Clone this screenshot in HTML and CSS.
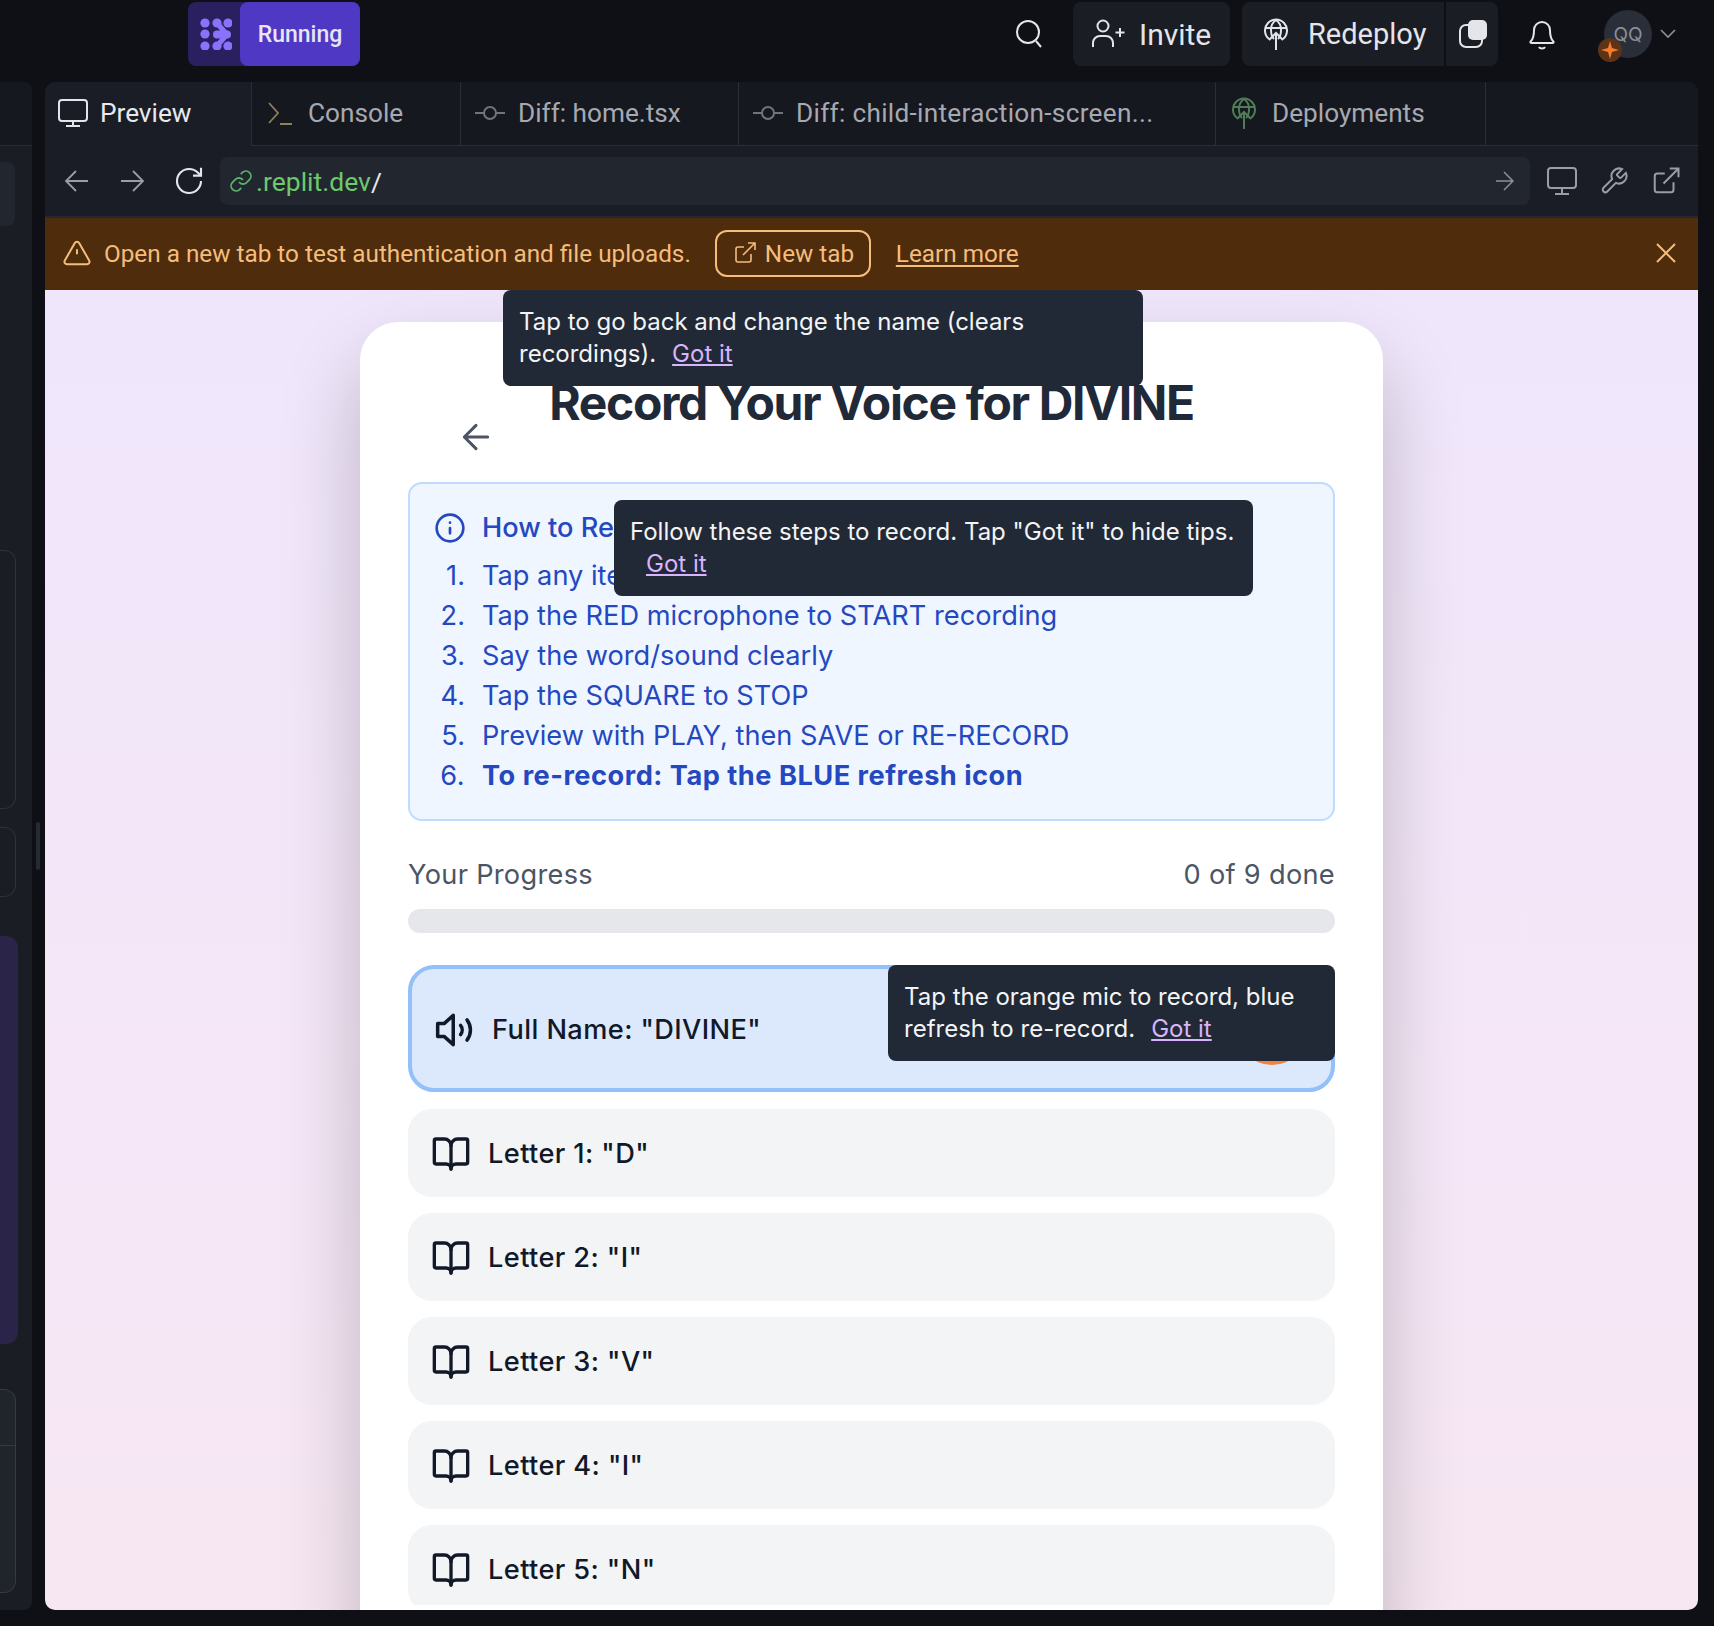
FILE: index.html
```html
<!DOCTYPE html>
<html lang="en">
<head>
  <meta charset="UTF-8">
  <title>Record Your Voice</title>
  <link rel="stylesheet" href="styles.css">
</head>
<body>

  <header class="topbar">
    <div class="status">
      <div class="status-logo">
        <svg width="32" height="32" viewBox="0 0 32 32" fill="#8b72fb">
          <circle cx="5" cy="5" r="4.6"/><circle cx="17" cy="5" r="4.6"/><circle cx="28" cy="5" r="4.6"/>
          <circle cx="5" cy="16" r="4.6"/>
          <circle cx="5" cy="28" r="4.6"/><circle cx="17" cy="28" r="4.6"/><circle cx="28" cy="28" r="4.6"/>
          <path d="M17 5l10 11.500-10 11.500" fill="none" stroke="#8b72fb" stroke-width="5" stroke-linecap="round" stroke-linejoin="round"/>
          <path d="M17 16.500h10" fill="none" stroke="#8b72fb" stroke-width="8" stroke-linecap="round"/>
        </svg>
      </div>
      <div class="status-label">Running</div>
    </div>

    <div class="top-actions">
      <button class="icon-btn">
        <svg width="32" height="32" viewBox="0 0 32 32" class="ico"><circle cx="15" cy="14" r="11"/><path d="M23 23l5 6"/></svg>
      </button>
      <button class="chip invite">
        <svg width="34" height="30" viewBox="0 0 34 30" class="ico"><circle cx="12" cy="7" r="5.5"/><path d="M2 28v-4a7 7 0 0 1 7-7h6a7 7 0 0 1 7 7v4"/><path d="M29 9v9M24.500 13.500h9"/></svg>
        Invite
      </button>
      <div class="chip-group">
        <button class="chip redeploy">
          <svg width="24" height="32" viewBox="0 0 24 32" class="ico"><path d="M5 21a11 11 0 1 1 14 0"/><path d="M12 2c-3 2-5 6-5 10s1 7 3 9M12 2c3 2 5 6 5 10s-1 7-3 9M1.500 10h21"/><path d="M12 32V15M5 22l7-7 7 7"/></svg>
          Redeploy
        </button>
        <button class="chip stack">
          <svg width="28" height="28" viewBox="0 0 28 28"><rect x="1" y="5" width="22" height="22" rx="6" fill="none" stroke="#e4e5ea" stroke-width="2"/><rect x="9" y="0" width="19" height="20" rx="5" fill="#e4e5ea"/></svg>
        </button>
      </div>
      <button class="icon-btn bell">
        <svg width="28" height="32" viewBox="0 0 28 32" class="ico"><path d="M3 23c2-2 3-4 3-11a8 8 0 0 1 16 0c0 7 1 9 3 11 1 1 1 2-1 2H4c-2 0-2-1-1-2z"/><path d="M11 29c1 2 5 2 6 0"/></svg>
      </button>
      <div class="avatar">
        QQ
        <span class="spark">
          <svg width="18" height="18" viewBox="0 0 18 18"><path d="M9 0l2 7 7 2-7 2-2 7-2-7-7-2 7-2z" fill="#f97a2a"/></svg>
        </span>
      </div>
      <svg class="caret" width="16" height="10" viewBox="0 0 16 10"><path d="M1 1l7 7 7-7" fill="none" stroke="#8d9099" stroke-width="1.6"/></svg>
    </div>
  </header>

  <div class="workspace">
    <aside class="side">
      <div class="side-head"></div>
      <div class="side-field"></div>
      <div class="side-box box-a"></div>
      <div class="side-box box-b"></div>
      <div class="side-active"></div>
      <div class="side-box box-c"><div class="box-c-line"></div></div>
    </aside>

    <div class="gutter"><span class="grip"></span></div>

    <main class="panel">
      <nav class="tabs">
        <div class="tab active tab-preview">
          <svg width="30" height="28" viewBox="0 0 30 28" class="ico"><rect x="1" y="1" width="28" height="21" rx="3"/><path d="M15 22v5M8 27h14"/></svg>
          Preview
        </div>
        <div class="tab tab-console">
          <svg width="24" height="24" viewBox="0 0 24 24" fill="none" stroke="#8c8158" stroke-width="1.8"><path d="M1 2l9 10-9 10"/><path d="M12 23h12" stroke="#8c8158"/></svg>
          Console
        </div>
        <div class="tab tab-diff">
          <svg width="30" height="16" viewBox="0 0 30 16" class="ico-dim"><circle cx="15" cy="8" r="6"/><path d="M0 8h9M21 8h9"/></svg>
          Diff: home.tsx
        </div>
        <div class="tab tab-diff tab-long">
          <svg width="30" height="16" viewBox="0 0 30 16" class="ico-dim"><circle cx="15" cy="8" r="6"/><path d="M0 8h9M21 8h9"/></svg>
          Diff: child-interaction-screen...
        </div>
        <div class="tab tab-deploy">
          <svg width="24" height="32" viewBox="0 0 24 32" fill="none" stroke="#4f7d58" stroke-width="2"><path d="M5 21a11 11 0 1 1 14 0"/><path d="M12 2c-3 2-5 6-5 10s1 7 3 9M12 2c3 2 5 6 5 10s-1 7-3 9M1.500 10h21"/><path d="M12 32V15M5 22l7-7 7 7"/></svg>
          Deployments
        </div>
        <div class="tab-rest"></div>
      </nav>

      <div class="urlbar">
        <svg class="nav-back" width="24" height="24" viewBox="0 0 24 24" fill="none" stroke="#9a9da5" stroke-width="1.8"><path d="M12 2L2 12l10 10M2 12h22"/></svg>
        <svg class="nav-fwd" width="24" height="24" viewBox="0 0 24 24" fill="none" stroke="#9a9da5" stroke-width="1.8"><path d="M12 2l10 10-10 10M22 12H0"/></svg>
        <svg class="nav-reload" width="32" height="32" viewBox="0 0 24 24" fill="none" stroke="#e4e5ea" stroke-width="1.600"><path d="M21 12a9 9 0 1 1-9-9c2.520 0 4.930 1 6.740 2.740L21 8"/><path d="M21 2v6h-6"/></svg>
        <div class="url-input">
          <svg width="24" height="24" viewBox="0 0 24 24" fill="none" stroke="#58b368" stroke-width="1.800"><path d="M10 13a5 5 0 0 0 7.540.54l3-3a5 5 0 0 0-7.070-7.070l-1.720 1.710"/><path d="M14 11a5 5 0 0 0-7.540-.54l-3 3a5 5 0 0 0 7.070 7.070l1.710-1.710"/></svg>
          <span class="url-text">.replit.dev<span class="url-slash">/</span></span>
          <svg class="url-go" width="18" height="20" viewBox="0 0 18 20" fill="none" stroke="#8d9099" stroke-width="1.500"><path d="M8 1l9 9-9 9M17 10H0"/></svg>
        </div>
        <div class="url-tools">
          <svg width="30" height="30" viewBox="0 0 30 30" fill="none" stroke="#9a9da5" stroke-width="2"><rect x="1" y="2" width="28" height="20" rx="3"/><path d="M15 22v6M8 28h14"/></svg>
          <svg width="30" height="30" viewBox="0 0 24 24" fill="none" stroke="#9a9da5" stroke-width="1.600"><path d="M14.700 6.300a1 1 0 0 0 0 1.400l1.600 1.600a1 1 0 0 0 1.400 0l3.770-3.770a6 6 0 0 1-7.940 7.940l-6.910 6.910a2.120 2.120 0 0 1-3-3l6.910-6.910a6 6 0 0 1 7.940-7.940l-3.760 3.760z"/></svg>
          <svg width="30" height="30" viewBox="0 0 24 24" fill="none" stroke="#9a9da5" stroke-width="1.600"><path d="M18 13v6a2 2 0 0 1-2 2H5a2 2 0 0 1-2-2V8a2 2 0 0 1 2-2h6"/><path d="M15 2h7v7M10 14L22 2"/></svg>
        </div>
      </div>

      <div class="banner">
        <svg width="32" height="30" viewBox="0 0 24 24" class="ico-warn"><path d="M21.730 18l-8-14a2 2 0 0 0-3.480 0l-8 14A2 2 0 0 0 4 21h16a2 2 0 0 0 1.730-3z"/><path d="M12 9v4M12 17h.01"/></svg>
        <span class="banner-text">Open a new tab to test authentication and file uploads.</span>
        <button class="new-tab">
          <svg width="24" height="24" viewBox="0 0 24 24" class="ico-warn"><path d="M18 13v6a2 2 0 0 1-2 2H5a2 2 0 0 1-2-2V8a2 2 0 0 1 2-2h6"/><path d="M15 2h7v7M10 14L22 2"/></svg>
          New tab
        </button>
        <a class="learn" href="#">Learn more</a>
        <svg class="banner-close" width="22" height="22" viewBox="0 0 22 22" fill="none" stroke="#f5bd7c" stroke-width="2"><path d="M2 2l18 18M20 2L2 20"/></svg>
      </div>

      <div class="content">
        <div class="tip tip-back">
          Tap to go back and change the name (clears recordings).<a href="#">Got it</a>
        </div>

        <section class="card">
          <div class="card-head">
            <h1>Record Your Voice for DIVINE</h1>
            <svg class="back" width="40" height="40" viewBox="0 0 24 24" fill="none" stroke="#4b5563" stroke-width="1.800" stroke-linecap="round" stroke-linejoin="round"><path d="M12 19l-7-7 7-7M19 12H5"/></svg>
          </div>

          <div class="howto">
            <div class="howto-title">
              <svg width="32" height="32" viewBox="0 0 24 24" fill="none" stroke="#2448c0" stroke-width="2" stroke-linecap="round"><circle cx="12" cy="12" r="10"/><path d="M12 16v-4M12 8h.01"/></svg>
              How to Record
            </div>
            <ol class="steps">
              <li><span class="num">1.</span>Tap any item to select it</li>
              <li><span class="num">2.</span>Tap the RED microphone to START recording</li>
              <li><span class="num">3.</span>Say the word/sound clearly</li>
              <li><span class="num">4.</span>Tap the SQUARE to STOP</li>
              <li><span class="num">5.</span>Preview with PLAY, then SAVE or RE-RECORD</li>
              <li class="strong"><span class="num">6.</span>To re-record: Tap the BLUE refresh icon</li>
            </ol>
            <div class="tip tip-steps">
              Follow these steps to record. Tap "Got it" to hide tips.<a href="#">Got it</a>
            </div>
          </div>

          <div class="progress-head">
            <span>Your Progress</span>
            <span>0 of 9 done</span>
          </div>
          <div class="progress-bar"></div>

          <div class="items">
            <div class="item current">
              <svg width="44" height="44" viewBox="0 0 24 24" fill="none" stroke="#111827" stroke-width="1.900" stroke-linecap="round" stroke-linejoin="round"><path d="M10.500 4L5.500 8.500H2v7h3.500l5 4.500z"/><path d="M14.500 9.500a4 4 0 0 1 0 5"/><path d="M18 6.500a9 9 0 0 1 0 11"/></svg>
              <span>Full Name: "DIVINE"</span>
              <span class="mic"></span>
              <div class="tip tip-mic">
                Tap the orange mic to record, blue refresh to re-record.<a href="#">Got it</a>
              </div>
            </div>
            <div class="item">
              <svg width="40" height="40" viewBox="0 0 24 24" class="ico-book"><path d="M12 7v14"/><path d="M3 18a1 1 0 0 1-1-1V4a1 1 0 0 1 1-1h5a4 4 0 0 1 4 4 4 4 0 0 1 4-4h5a1 1 0 0 1 1 1v13a1 1 0 0 1-1 1h-6a3 3 0 0 0-3 3 3 3 0 0 0-3-3z"/></svg>
              <span>Letter 1: "D"</span>
            </div>
            <div class="item">
              <svg width="40" height="40" viewBox="0 0 24 24" class="ico-book"><path d="M12 7v14"/><path d="M3 18a1 1 0 0 1-1-1V4a1 1 0 0 1 1-1h5a4 4 0 0 1 4 4 4 4 0 0 1 4-4h5a1 1 0 0 1 1 1v13a1 1 0 0 1-1 1h-6a3 3 0 0 0-3 3 3 3 0 0 0-3-3z"/></svg>
              <span>Letter 2: "I"</span>
            </div>
            <div class="item">
              <svg width="40" height="40" viewBox="0 0 24 24" class="ico-book"><path d="M12 7v14"/><path d="M3 18a1 1 0 0 1-1-1V4a1 1 0 0 1 1-1h5a4 4 0 0 1 4 4 4 4 0 0 1 4-4h5a1 1 0 0 1 1 1v13a1 1 0 0 1-1 1h-6a3 3 0 0 0-3 3 3 3 0 0 0-3-3z"/></svg>
              <span>Letter 3: "V"</span>
            </div>
            <div class="item">
              <svg width="40" height="40" viewBox="0 0 24 24" class="ico-book"><path d="M12 7v14"/><path d="M3 18a1 1 0 0 1-1-1V4a1 1 0 0 1 1-1h5a4 4 0 0 1 4 4 4 4 0 0 1 4-4h5a1 1 0 0 1 1 1v13a1 1 0 0 1-1 1h-6a3 3 0 0 0-3 3 3 3 0 0 0-3-3z"/></svg>
              <span>Letter 4: "I"</span>
            </div>
            <div class="item">
              <svg width="40" height="40" viewBox="0 0 24 24" class="ico-book"><path d="M12 7v14"/><path d="M3 18a1 1 0 0 1-1-1V4a1 1 0 0 1 1-1h5a4 4 0 0 1 4 4 4 4 0 0 1 4-4h5a1 1 0 0 1 1 1v13a1 1 0 0 1-1 1h-6a3 3 0 0 0-3 3 3 3 0 0 0-3-3z"/></svg>
              <span>Letter 5: "N"</span>
            </div>
          </div>
        </section>
      </div>
    </main>
  </div>

</body>
</html>
```

FILE: styles.css
```css
* {
  box-sizing: border-box;
}

body {
  margin: 0;
  height: 1626px;
  overflow: hidden;
  background: #0e1015;
  font-family: Roboto, "Noto Sans", sans-serif;
  color: #e8e9ed;
}

button {
  font: inherit;
  color: inherit;
  border: none;
  background: none;
  padding: 0;
}

.ico {
  fill: none;
  stroke: #e4e5ea;
  stroke-width: 2;
}

.ico-dim {
  fill: none;
  stroke: #70747c;
  stroke-width: 2;
}

.ico-warn {
  fill: none;
  stroke: #f5bd7c;
  stroke-width: 1.6;
}

.ico-book {
  fill: none;
  stroke: #111827;
  stroke-width: 2;
  stroke-linecap: round;
  stroke-linejoin: round;
}

/* top bar */
.topbar {
  height: 82px;
  padding: 2px 38px 0 188px;
  display: flex;
  align-items: flex-start;
  justify-content: space-between;
}

.status {
  display: flex;
  height: 64px;
  width: 172px;
  background: #2a2060;
  border-radius: 8px;
}

.status-logo {
  width: 52px;
  padding: 16px 0 0 12px;
}

.status-label {
  flex: 1;
  background: #4f38c4;
  border-radius: 8px;
  display: flex;
  align-items: center;
  justify-content: center;
  font-size: 23px;
  font-weight: 500;
  color: #e8e6f5;
}

.top-actions {
  display: flex;
  align-items: center;
  height: 64px;
}

.icon-btn {
  width: 48px;
  height: 48px;
  display: flex;
  align-items: center;
  justify-content: center;
}

.chip {
  height: 64px;
  background: #1a1d24;
  display: flex;
  align-items: center;
  font-size: 30px;
  color: #e4e5ea;
}

.invite {
  width: 157px;
  margin: 0 12px 0 20px;
  padding-left: 18px;
  gap: 14px;
  border-radius: 8px;
}

.chip-group {
  display: flex;
  gap: 2px;
}

.redeploy {
  width: 202px;
  padding-left: 22px;
  gap: 20px;
  border-radius: 8px 0 0 8px;
  font-size: 29px;
}

.stack {
  width: 52px;
  padding-left: 13px;
  border-radius: 0 8px 8px 0;
}

.bell {
  margin: 0 38px 0 20px;
}

.avatar {
  position: relative;
  width: 48px;
  height: 48px;
  border-radius: 50%;
  background: #2a2e38;
  color: #8a8e99;
  font-family: Inter, sans-serif;
  font-size: 19px;
  display: flex;
  align-items: center;
  justify-content: center;
}

.spark {
  position: absolute;
  left: -6px;
  top: 28px;
  width: 24px;
  height: 24px;
  border-radius: 50%;
  background: #5c3316;
  display: flex;
  align-items: center;
  justify-content: center;
}

.caret {
  margin-left: 8px;
}

/* page columns */
.workspace {
  height: 1528px;
  display: flex;
}

.side {
  width: 32px;
  background: #1a1d24;
  border-radius: 0 8px 8px 0;
  overflow: hidden;
}

.side-head {
  height: 64px;
  background: #16181f;
  border-bottom: 1px solid #2a2d36;
}

.side-field {
  width: 15px;
  height: 64px;
  margin-top: 16px;
  background: #22262f;
  border-radius: 0 8px 8px 0;
}

.side-box {
  width: 16px;
  border: 1.5px solid #2c3436;
  border-left: none;
  border-radius: 0 12px 12px 0;
}

.box-a {
  height: 259px;
  margin-top: 324px;
}

.box-b {
  height: 70px;
  margin-top: 18px;
}

.side-active {
  width: 18px;
  height: 408px;
  margin-top: 39px;
  background: #2a2448;
  border-radius: 0 12px 12px 0;
}

.box-c {
  height: 204px;
  margin-top: 45px;
  background: #20242b;
  border-color: #353941;
}

.box-c-line {
  height: 56px;
  border-bottom: 1px solid #353941;
}

.gutter {
  width: 13px;
  padding-left: 4px;
  display: flex;
  align-items: center;
}

.grip {
  width: 4px;
  height: 48px;
  background: #272a35;
  border-radius: 2px;
}

.panel {
  width: 1653px;
  display: flex;
  flex-direction: column;
  background: #1a1d26;
  border-radius: 10px;
  overflow: hidden;
}

/* tabs */
.tabs {
  height: 64px;
  flex-shrink: 0;
  display: flex;
  font-size: 26.2px;
  color: #a6a9b1;
}

.tab {
  display: flex;
  align-items: center;
  padding-bottom: 2px;
  background: #16181f;
  border-right: 1px solid #2a2d36;
  border-bottom: 1px solid #2a2d36;
}

.tab.active {
  background: #1a1d26;
  color: #e8e9ed;
  border-bottom: none;
  border-right: 1px solid #2a2d36;
}

.tab-preview {
  width: 207px;
  padding-left: 13px;
  gap: 12px;
}

.tab-console {
  width: 209px;
  padding-left: 16px;
  gap: 16px;
}

.tab-diff {
  width: 278px;
  padding-left: 14px;
  gap: 13px;
}

.tab-long {
  width: 477px;
  letter-spacing: 0.3px;
}

.tab-deploy {
  width: 270px;
  padding-left: 16px;
  gap: 16px;
}

.tab-rest {
  flex: 1;
  background: #16181f;
  border-bottom: 1px solid #2a2d36;
}

/* url bar */
.urlbar {
  height: 72px;
  flex-shrink: 0;
  display: flex;
  align-items: center;
  padding: 0 16px 0 19px;
  border-bottom: 2px solid #26282f;
}

.nav-fwd {
  margin-left: 33px;
}

.nav-reload {
  margin-left: 28px;
}

.url-input {
  width: 1310px;
  height: 48px;
  margin-left: 15px;
  padding: 0 16px 0 9px;
  display: flex;
  align-items: center;
  background: #22262f;
  border-radius: 8px;
}

.url-text {
  margin-left: 3px;
  font-size: 26.5px;
  color: #6cc96c;
}

.url-slash {
  color: #e8e9ed;
}

.url-go {
  margin-left: auto;
}

.url-tools {
  display: flex;
  gap: 22px;
  margin-left: 17px;
}

/* banner */
.banner {
  height: 72px;
  flex-shrink: 0;
  padding: 0 21px 2px 16px;
  display: flex;
  align-items: center;
  background: #4e2c0c;
  font-size: 24.3px;
  color: #f5bd7c;
}

.banner-text {
  margin-left: 11px;
}

.new-tab {
  width: 156px;
  height: 47px;
  margin-left: 24px;
  padding-left: 16px;
  gap: 8px;
  display: flex;
  align-items: center;
  border: 2px solid #f5bd7c;
  border-radius: 12px;
  color: #f5bd7c;
}

.learn {
  margin-left: 25px;
  color: #f5bd7c;
  text-underline-offset: 3px;
}

.banner-close {
  margin-left: auto;
}

/* preview page */
.content {
  position: relative;
  flex: 1;
  overflow: hidden;
  background: linear-gradient(to bottom, #f0e6fc, #f7e7f3);
  border-radius: 0 0 8px 8px;
  font-family: Inter, sans-serif;
  font-size: 27.2px;
  line-height: 38.4px;
  color: #111827;
}

.tip {
  position: absolute;
  z-index: 5;
  background: #222936;
  border-radius: 8px;
  padding: 16px;
  font-size: 24px;
  font-weight: 400;
  line-height: 32px;
  letter-spacing: 0;
  color: #f3f4f6;
}

.tip a {
  display: inline-block;
  margin-left: 16px;
  color: #d8b4fe;
}

.tip-back {
  left: 458px;
  top: 0;
  width: 640px;
}

.tip-steps {
  left: 204px;
  top: 16px;
  width: 639px;
}

.tip-mic {
  right: -4px;
  top: -4px;
  width: 447px;
}

.card {
  width: 1023px;
  height: 1400px;
  margin: 32px auto 0;
  padding: 48px;
  background: #fff;
  border-radius: 38px;
  box-shadow: 0 40px 80px rgba(0, 0, 0, 0.22);
}

.card-head {
  display: grid;
  height: 112px;
}

.card-head h1 {
  grid-area: 1 / 1;
  margin: 1px 0 0;
  text-align: center;
  font-size: 48px;
  line-height: 64px;
  font-weight: 700;
  letter-spacing: -1.35px;
  color: #1f2937;
}

.back {
  grid-area: 1 / 1;
  margin: 47px 0 0 48px;
}

.howto {
  position: relative;
  height: 339px;
  padding: 25px 24px 0;
  background: #eff6ff;
  border: 2px solid #bfdbfe;
  border-radius: 14px;
  color: #2448c0;
}

.howto-title {
  display: flex;
  align-items: center;
  gap: 16px;
  font-size: 27.2px;
  font-weight: 500;
  line-height: 38px;
}

.steps {
  list-style: none;
  margin: 9px 0 0;
  padding: 0;
}

.steps li {
  display: flex;
  height: 40px;
  line-height: 40px;
}

.steps .strong {
  font-weight: 700;
  letter-spacing: 0.5px;
}

.num {
  width: 31px;
  margin-right: 17px;
  text-align: right;
  font-weight: 400;
}

.progress-head {
  display: flex;
  justify-content: space-between;
  margin-top: 35px;
  letter-spacing: 0.3px;
  color: #4b5563;
}

.progress-bar {
  height: 24px;
  margin-top: 15px;
  background: #e5e7eb;
  border-radius: 12px;
}

.items {
  height: 640px;
  margin-top: 32px;
  display: flex;
  flex-direction: column;
  gap: 16px;
  overflow: hidden;
}

.item {
  position: relative;
  height: 88px;
  flex-shrink: 0;
  padding: 2px 0 0 23px;
  display: flex;
  align-items: center;
  gap: 17px;
  background: #f3f4f6;
  border-radius: 24px;
  font-weight: 500;
  letter-spacing: 0.4px;
}

.item.current {
  height: 127px;
  margin-bottom: 1px;
  padding-left: 22px;
  gap: 14px;
  background: #dce8fb;
  border: 4px solid #93c0f8;
  border-radius: 26px;
}

.mic {
  width: 72px;
  height: 72px;
  margin: -2px 23px 0 auto;
  border-radius: 50%;
  background: #f0843c;
}
```
